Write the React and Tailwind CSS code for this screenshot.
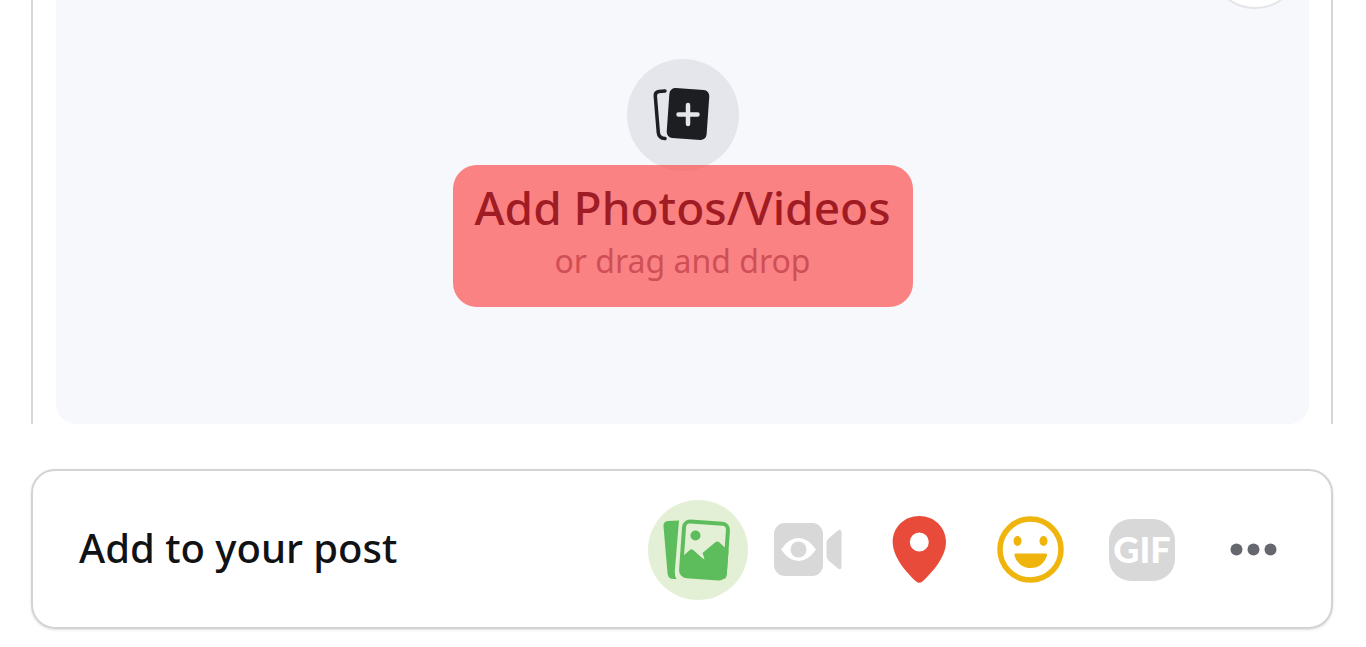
import React from 'react'

const AddMediaIcon = () => (
  <svg viewBox="0 0 112 112" className="h-28 w-28" fill="none" aria-hidden="true">
    <path d="M38 32l-6 .6q-4 .5-3.700 4.500l3 36.500q.5 5.500 6.700 6" stroke="#1c1e21" strokeWidth="3.500" strokeLinecap="round" />
    <rect x="41" y="30" width="40" height="50" rx="6" transform="rotate(4 61 55)" fill="#1c1e21" />
    <path d="M51.500 55.500h19M61 46v19" stroke="#e4e6eb" strokeWidth="4.500" strokeLinecap="round" />
  </svg>
)

const PhotoIcon = () => (
  <svg viewBox="0 0 100 100" className="h-full w-full" aria-hidden="true">
    <path d="M31 20.500L20 21q-5 .5-4.500 5.500L19.500 73q.5 6 6 6h3q-2-3-1.700-8z" fill="#5dbd5c" />
    <rect x="34.500" y="22.500" width="44" height="55" rx="6" transform="rotate(4 56.500 50)" fill="none" stroke="#5dbd5c" strokeWidth="4" />
    <circle cx="47.500" cy="35.500" r="5" fill="#5dbd5c" />
    <path d="M34.500 56.500l7-6.300q2-1.700 4 0L53 57l3.500 2.500q-.5-3-2-6.500L67 42.500q2.500-1.800 4.500 0l9 8.500-2 25q-.5 3-3.500 3l-38-3q-4-.5-3.500-4z" fill="#5dbd5c" />
  </svg>
)

const LiveVideoIcon = () => (
  <svg viewBox="0 0 100 100" className="h-full w-full" aria-hidden="true">
    <rect x="15" y="23" width="49" height="53" rx="11" fill="#d8d8d8" />
    <path d="M67.500 43q0-2.500 2-4.500l9.500-8q3.500-2 3.500 2v34q0 4-3.500 2l-9.500-8q-2-2-2-4.500z" fill="#d8d8d8" />
    <path d="M22 49.500Q30 38 39.500 38T57 49.500Q49 61 39.500 61T22 49.500z" fill="#fff" />
    <circle cx="39.500" cy="49.500" r="8" fill="#d8d8d8" />
  </svg>
)

const PinIcon = () => (
  <svg viewBox="0 0 100 100" className="h-full w-full" aria-hidden="true">
    <path fillRule="evenodd" d="M49.300 16C34 16 22.700 27.500 22.700 42c0 14.500 13 30 23.500 39.500q3 2.500 6.200 0C63 72 76 56.500 76 42 76 27.500 64.500 16 49.300 16zm0 16.500a9.500 9.500 0 1 1 0 19 9.500 9.500 0 0 1 0-19z" fill="#e94b3a" />
  </svg>
)

const SmileIcon = () => (
  <svg viewBox="0 0 100 100" className="h-full w-full" fill="#efb50c" aria-hidden="true">
    <circle cx="49.500" cy="49.500" r="30.500" fill="none" stroke="#efb50c" strokeWidth="5.500" />
    <ellipse cx="36.500" cy="41" rx="4" ry="5" />
    <ellipse cx="62.500" cy="41" rx="4" ry="5" />
    <path d="M35 53.500h29.500q2 0 1.500 2C63.500 63.500 57.500 68 49.700 68S36 63.500 33.500 55.500q-.5-2 1.500-2z" />
  </svg>
)

const GifIcon = () => (
  <span className="mx-auto flex h-[62px] w-[66px] items-center justify-center rounded-[22px] bg-[#d8d8d8] pb-0.5 font-['Lato',sans-serif] text-4xl font-black text-white">
    GIF
  </span>
)

const MoreIcon = () => (
  <svg viewBox="0 0 100 100" className="h-full w-full" fill="#65676e" aria-hidden="true">
    <circle cx="33.500" cy="49.500" r="6" />
    <circle cx="50.500" cy="49.500" r="6" />
    <circle cx="67.500" cy="49.500" r="6" />
  </svg>
)

const actions = [
  { name: 'Photo/video', icon: PhotoIcon, className: 'bg-[#e4f0d5]' },
  { name: 'Live video', icon: LiveVideoIcon },
  { name: 'Check in', icon: PinIcon },
  { name: 'Feeling/activity', icon: SmileIcon },
  { name: 'GIF', icon: GifIcon },
  { name: 'More', icon: MoreIcon },
]

const App = () => {
  return (
    <main className="overflow-hidden bg-white pr-[33px] pb-4 pl-[31px] font-['Noto_Sans','Open_Sans',sans-serif]">
      {/* Drop zone */}
      <div className="border-x-2 border-[#d6d7d9] pr-[22px] pl-[23px]">
        <div className="relative rounded-b-[20px] bg-[#f7f8fb]">
          <button
            aria-label="Close"
            className="absolute -top-[83px] right-2 h-[92px] w-[92px] rounded-full border-2 border-[#e4e5e8] bg-white"
          />
          <button className="flex w-full flex-col items-center pt-[59px] pb-[117px]">
            <span className="rounded-full bg-[#e4e6eb]">
              <AddMediaIcon />
            </span>
            <span className="-mt-1.5 flex h-[142px] w-[460px] flex-col items-center rounded-3xl bg-[#fd4242]/65 pt-3">
              <span className="text-[46px] leading-[60px] font-medium whitespace-nowrap text-[#a01c24]">Add Photos/Videos</span>
              <span className="text-[32px] leading-[48px] text-[#cf4f57]">or drag and drop</span>
            </span>
          </button>
        </div>
      </div>

      {/* Post options */}
      <div className="mt-[45px] flex h-40 items-center justify-between rounded-3xl border-2 border-[#d2d3d5] pt-0.5 pr-7 pl-[46px] shadow-sm">
        <h2 className="pb-1 text-[40px] leading-[56px] font-medium whitespace-nowrap text-[#111214]">Add to your post</h2>
        <div className="flex gap-[11px]">
          {actions.map((action) => (
            <button key={action.name} aria-label={action.name} className={`h-[100px] w-[100px] rounded-full ${action.className || ''}`}>
              <action.icon />
            </button>
          ))}
        </div>
      </div>
    </main>
  )
}

export default App
